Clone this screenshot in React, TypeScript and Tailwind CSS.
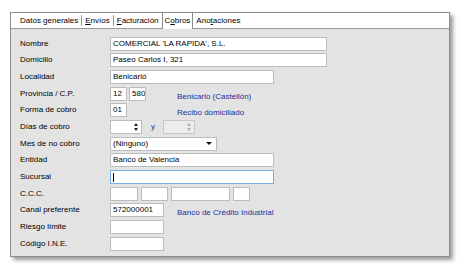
import React from "react";

const font = { fontFamily: '"Liberation Sans", Arial, sans-serif' };

function Box({ w, value, focused, className = "" }: { w: string; value?: string; focused?: boolean; className?: string }) {
  return (
    <div
      className={`${w} h-[14px] bg-white border ${
        focused ? "border-[#7aaee6]" : "border-[#bcbcbc]"
      } flex items-center pl-[2px] text-[8px] leading-none text-black whitespace-nowrap overflow-hidden ${className}`}
    >
      {value}
      {focused && <span className="w-px h-[9px] bg-black" />}
    </div>
  );
}

function Spin({ disabled }: { disabled?: boolean }) {
  return (
    <div
      className={`w-[32px] h-[14px] border flex justify-end ${
        disabled ? "bg-[#ececec] border-[#c8c8c8]" : "bg-white border-[#bcbcbc]"
      }`}
    >
      <div className="w-[10px] flex flex-col items-center justify-center gap-[2px]">
        <span
          className={`w-0 h-0 border-l-[2.5px] border-r-[2.5px] border-b-[3px] border-l-transparent border-r-transparent ${
            disabled ? "border-b-[#b0b0b0]" : "border-b-[#222]"
          }`}
        />
        <span
          className={`w-0 h-0 border-l-[2.5px] border-r-[2.5px] border-t-[3px] border-l-transparent border-r-transparent ${
            disabled ? "border-t-[#b0b0b0]" : "border-t-[#222]"
          }`}
        />
      </div>
    </div>
  );
}

function Row({ label, children }: { label: string; children?: React.ReactNode }) {
  return (
    <div className="h-[16.67px] flex items-center">
      <div className="w-[99px] pl-[9px] text-[8px] text-black whitespace-nowrap">{label}</div>
      <div className="flex items-center">{children}</div>
    </div>
  );
}

const Blue = ({ children }: { children: React.ReactNode }) => (
  <span className="text-[8px] text-[#1f2c9c] whitespace-nowrap">{children}</span>
);

const U = ({ children }: { children: React.ReactNode }) => <span className="underline underline-offset-1">{children}</span>;

export default function App() {
  return (
    <div className="w-[461px] h-[269px] bg-white overflow-hidden pt-[12px] pl-[10px]" style={font}>
      <div className="w-[440px] h-[245px] border border-[#8c8c8c] bg-[#e3e3e3] shadow-[3px_3px_4px_rgba(0,0,0,0.4)] flex flex-col">
        {/* Tabs */}
        <div className="h-[16px] bg-white border-b border-[#9a9a9a] flex items-end text-[8px] text-black shrink-0">
          <div className="flex items-center h-[15px] pl-[9px]">
            <span className="pr-[3px]">Datos generales</span>
            <span className="w-px h-[11px] bg-[#9a9a9a]" />
            <span className="px-[3px]">
              <U>E</U>nvíos
            </span>
            <span className="w-px h-[11px] bg-[#9a9a9a]" />
            <span className="px-[3px]">
              <U>F</U>acturación
            </span>
          </div>
          <div className="h-[17px] -mb-px border border-b-0 border-[#8c8c8c] bg-white px-[2px] flex items-center self-end">
            C<U>o</U>bros
          </div>
          <div className="flex items-center h-[15px] pl-[3px]">
            <span>
              Ano<U>t</U>aciones
            </span>
          </div>
        </div>

        {/* Form */}
        <div className="pt-[6.5px] flex flex-col">
          <Row label="Nombre">
            <Box w="w-[217px]" value="COMERCIAL 'LA RAPIDA', S.L." />
          </Row>
          <Row label="Domicilio">
            <Box w="w-[217px]" value="Paseo Carlos I, 321" />
          </Row>
          <Row label="Localidad">
            <Box w="w-[164px]" value="Benicarló" />
          </Row>
          <Row label="Provincia / C.P.">
            <Box w="w-[17px]" value="12" />
            <Box w="w-[17px]" value="580" className="ml-[2px] pl-[1px]" />
            <span className="ml-[31px]">
              <Blue>Benicarlo (Castellón)</Blue>
            </span>
          </Row>
          <Row label="Forma de cobro">
            <Box w="w-[17px]" value="01" />
            <span className="ml-[50px]">
              <Blue>Recibo domiciliado</Blue>
            </span>
          </Row>
          <Row label="Días de cobro">
            <Spin />
            <span className="ml-[9px] mr-[8px] text-[8px] text-[#1f2c9c]">y</span>
            <Spin disabled />
          </Row>
          <Row label="Mes de no cobro">
            <div className="w-[107px] h-[14px] bg-white border border-[#bcbcbc] flex items-center justify-between pl-[2px] pr-[4px] text-[8px] text-black">
              (Ninguno)
              <span className="w-0 h-0 border-l-[3px] border-r-[3px] border-t-[3.5px] border-l-transparent border-r-transparent border-t-[#111]" />
            </div>
          </Row>
          <Row label="Entidad">
            <Box w="w-[164px]" value="Banco de Valencia" />
          </Row>
          <Row label="Sucursal">
            <Box w="w-[164px]" focused />
          </Row>
          <Row label="C.C.C.">
            <Box w="w-[28px]" />
            <Box w="w-[27px]" className="ml-[3px]" />
            <Box w="w-[59px]" className="ml-[3px]" />
            <Box w="w-[17px]" className="ml-[3px]" />
          </Row>
          <Row label="Canal preferente">
            <Box w="w-[54px]" value="572000001" />
            <span className="ml-[13px]">
              <Blue>Banco de Crédito Industrial</Blue>
            </span>
          </Row>
          <Row label="Riesgo límite">
            <Box w="w-[54px]" />
          </Row>
          <Row label="Código I.N.E.">
            <Box w="w-[54px]" />
          </Row>
        </div>
      </div>
    </div>
  );
}
